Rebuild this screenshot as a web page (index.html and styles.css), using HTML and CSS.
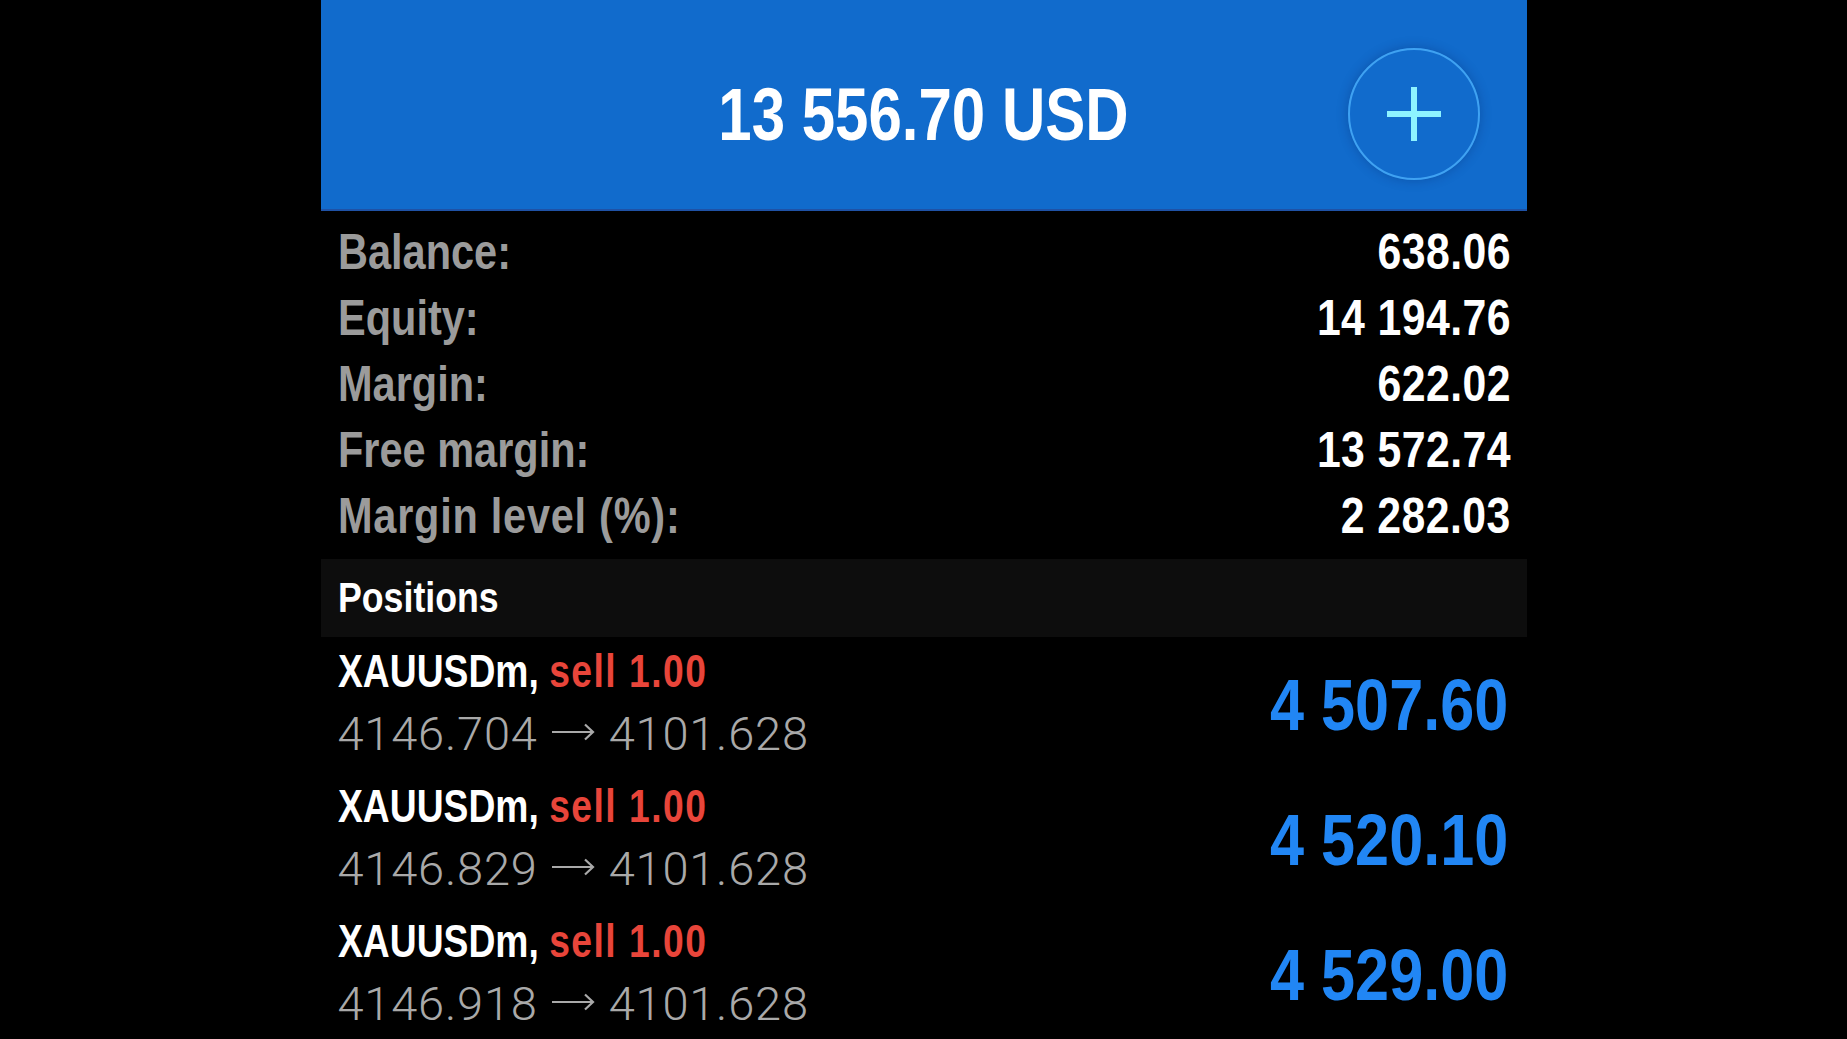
FILE: index.html
```html
<!DOCTYPE html>
<html>
<head>
<meta charset="utf-8">
<link rel="stylesheet" href="styles.css">
</head>
<body>
<div class="screen">
  <header class="top">
    <div class="spacer"></div>
    <div class="total">13 556.70 USD</div>
    <div class="plus-wrap">
      <div class="plus-btn">
        <svg width="56" height="56" viewBox="0 0 56 56"><path d="M28 1V55M1 28H55" stroke="#8ef3ff" stroke-width="6" fill="none"/></svg>
      </div>
    </div>
  </header>
  <section class="stats">
    <div class="stat"><span class="label">Balance:</span><span class="value">638.06</span></div>
    <div class="stat"><span class="label">Equity:</span><span class="value">14 194.76</span></div>
    <div class="stat"><span class="label">Margin:</span><span class="value">622.02</span></div>
    <div class="stat"><span class="label">Free margin:</span><span class="value">13 572.74</span></div>
    <div class="stat"><span class="label wide">Margin level (%):</span><span class="value">2 282.03</span></div>
  </section>
  <div class="section-title"><span class="title-text">Positions</span></div>
  <section class="positions">
    <div class="pos">
      <div class="pos-info">
        <div class="pos-name">XAUUSDm, <span class="sell">sell 1.00</span></div>
        <div class="pos-price">4146.704<svg class="arrow" width="44" height="20" viewBox="0 0 44 20"><path d="M1 10H42M34 2.5L42 10L34 17.5" stroke="#a9a9a9" stroke-width="2.2" fill="none"/></svg>4101.628</div>
      </div>
      <div class="pos-profit">4 507.60</div>
    </div>
    <div class="pos">
      <div class="pos-info">
        <div class="pos-name">XAUUSDm, <span class="sell">sell 1.00</span></div>
        <div class="pos-price">4146.829<svg class="arrow" width="44" height="20" viewBox="0 0 44 20"><path d="M1 10H42M34 2.5L42 10L34 17.5" stroke="#a9a9a9" stroke-width="2.2" fill="none"/></svg>4101.628</div>
      </div>
      <div class="pos-profit">4 520.10</div>
    </div>
    <div class="pos">
      <div class="pos-info">
        <div class="pos-name">XAUUSDm, <span class="sell">sell 1.00</span></div>
        <div class="pos-price">4146.918<svg class="arrow" width="44" height="20" viewBox="0 0 44 20"><path d="M1 10H42M34 2.5L42 10L34 17.5" stroke="#a9a9a9" stroke-width="2.2" fill="none"/></svg>4101.628</div>
      </div>
      <div class="pos-profit">4 529.00</div>
    </div>
  </section>
</div>
</body>
</html>
```
FILE: styles.css
```css
html, body {
  margin: 0;
  padding: 0;
  background: #000;
  height: 100%;
  overflow: hidden;
}
body {
  font-family: "Liberation Sans", Arial, sans-serif;
  font-weight: 700;
  color: #fff;
}
.screen {
  width: 1206px;
  margin: 0 auto;
}
.top {
  height: 211px;
  box-sizing: border-box;
  padding-top: 19px;
  background: #116bcc;
  border-bottom: 2px solid #1f52a6;
  display: grid;
  grid-template-columns: 1fr auto 1fr;
  align-items: center;
}
.total {
  font-size: 75px;
  line-height: 1;
  color: #fff;
  transform: scaleX(0.8);
  transform-origin: center;
}
.plus-wrap {
  display: flex;
  justify-content: flex-end;
  padding-right: 47px;
}
.plus-btn {
  width: 128px;
  height: 128px;
  border: 2px solid #3fa2f2;
  border-radius: 50%;
  display: flex;
  align-items: center;
  justify-content: center;
  box-shadow: 0 0 12px rgba(0, 30, 90, 0.3);
}
.plus-btn svg {
  display: block;
}
.stats {
  padding: 8px 16px 10px 17px;
}
.stat {
  display: flex;
  justify-content: space-between;
  font-size: 50px;
  line-height: 66px;
}
.label {
  color: #9b9b9b;
  transform: scaleX(0.83);
  transform-origin: left center;
}
.label.wide {
  letter-spacing: 0.9px;
}
.value {
  color: #fff;
  letter-spacing: 0.5px;
  transform: scaleX(0.855);
  transform-origin: right center;
}
.section-title {
  background: #0d0d0d;
  height: 78px;
  line-height: 78px;
  font-size: 42px;
  padding-left: 17px;
  color: #fff;
}
.title-text {
  display: inline-block;
  transform: scaleX(0.85);
  transform-origin: left center;
}
.pos {
  height: 135px;
  box-sizing: border-box;
  padding: 3px 18px 0 17px;
  display: flex;
  justify-content: space-between;
  align-items: flex-start;
}
.pos-name {
  font-size: 46px;
  line-height: 62px;
  color: #fff;
  white-space: nowrap;
  transform: scaleX(0.81);
  transform-origin: left center;
}
.sell {
  color: #e8453a;
  letter-spacing: 1.8px;
}
.pos-price {
  font-family: Roboto, "Liberation Sans", sans-serif;
  font-weight: 300;
  font-size: 47px;
  line-height: 64px;
  color: #a9a9a9;
  letter-spacing: 0.8px;
  white-space: nowrap;
}
.arrow {
  vertical-align: 8px;
  margin: 0 14px 0 13px;
}
.pos-profit {
  align-self: center;
  margin-top: -3px;
  font-size: 72px;
  line-height: 1;
  color: #2186f4;
  transform: scaleX(0.85);
  transform-origin: right center;
}
```
